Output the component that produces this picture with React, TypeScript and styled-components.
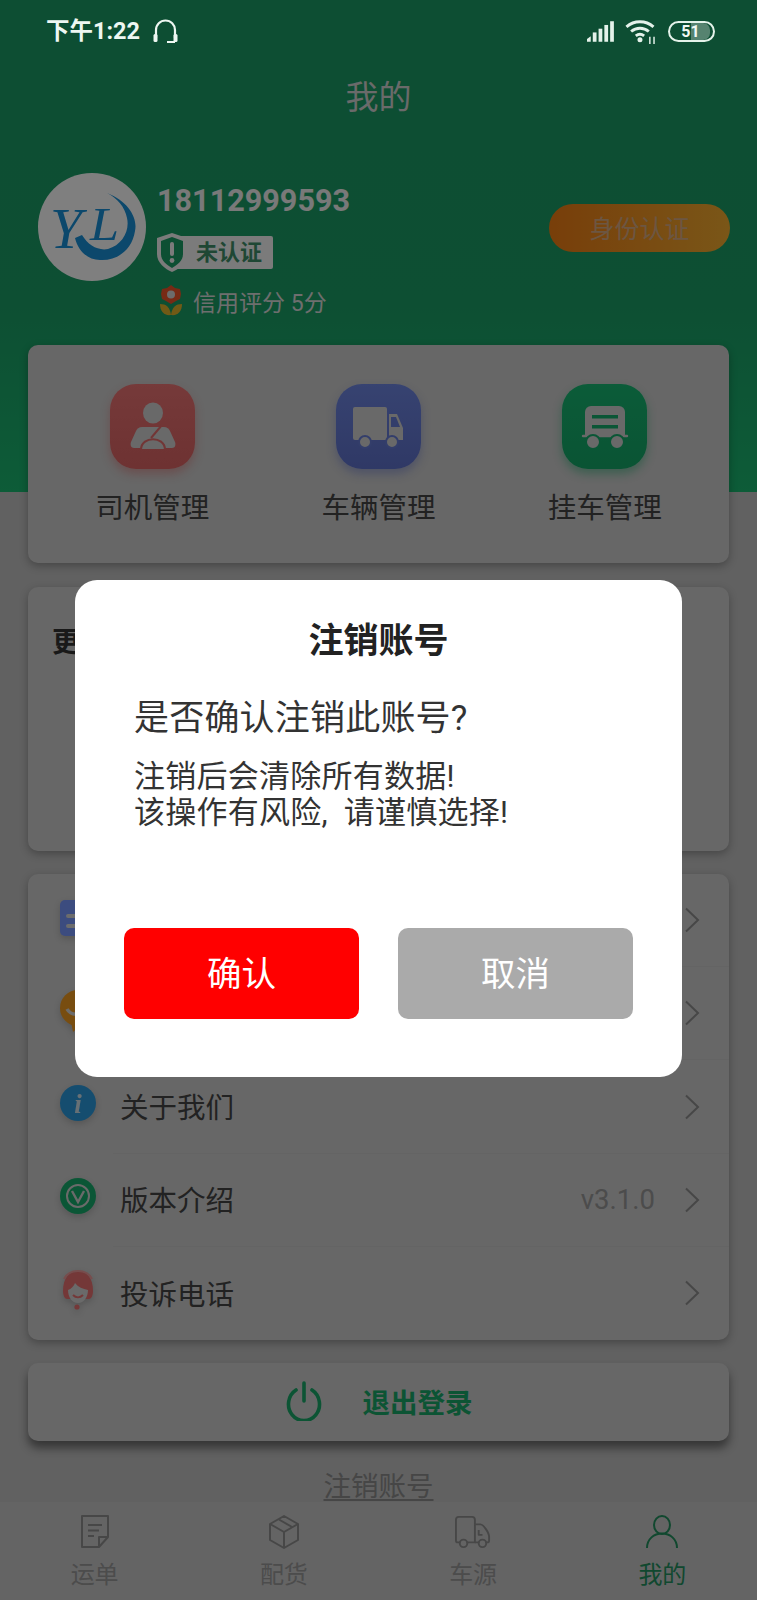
import React from "react";
import styled, { createGlobalStyle } from "styled-components";

const GlobalStyle = createGlobalStyle`
  html, body {
    margin: 0;
    padding: 0;
    background: #c2c2c2;
  }
  * {
    box-sizing: border-box;
  }
`;

const Page = styled.div`
  position: relative;
  width: 757px;
  height: 1600px;
  overflow: hidden;
  font-family: Roboto, "Noto Sans CJK SC", sans-serif;
  background: linear-gradient(#1a9c66 0, #1a9e66 300px, #1ab870 492px, #c2c2c2 492px);
`;

const StatusBar = styled.div`
  position: relative;
  z-index: 3;
  height: 62px;
  padding: 0 42px 0 46px;
  display: flex;
  align-items: center;
  justify-content: space-between;
  color: #eef7f2;
`;

const StatusGroup = styled.div`
  display: flex;
  align-items: center;
`;

const Time = styled.span`
  font-size: 23.5px;
  font-weight: 700;
  margin-right: 12px;
  padding-bottom: 4px;
`;

const TitleBar = styled.div`
  height: 68px;
  padding-bottom: 2px;
  display: flex;
  align-items: center;
  justify-content: center;
  font-size: 33px;
  color: #d4d4d4;
`;

const Profile = styled.div`
  height: 172px;
  margin-top: 43px;
  padding: 0 27px 0 38px;
  display: flex;
  align-items: flex-start;
`;

const Avatar = styled.div`
  width: 108px;
  height: 108px;
  border-radius: 50%;
  background: #ffffff;
  flex: none;
`;

const Info = styled.div`
  flex: 1;
  margin-left: 11px;
  padding-top: 9px;
`;

const Phone = styled.div`
  font-size: 30.6px;
  line-height: 38px;
  font-weight: 700;
  color: #f2f2f2;
`;

const Badge = styled.div`
  margin: 16px 0 0 13px;
  width: 103px;
  height: 33px;
  padding-bottom: 5px;
  display: flex;
  align-items: center;
  background: #f6f6f6;
  border-radius: 2px;
  font-size: 22px;
  font-weight: 700;
  color: #3f8f68;
`;

const ShieldSvg = styled.svg`
  flex: none;
  margin: 5px 9px 0 -13px;
`;

const Credit = styled.div`
  margin: 17px 0 0 2px;
  height: 31px;
  padding-bottom: 2px;
  display: flex;
  align-items: center;
  font-size: 23px;
  color: #dcdcdc;
  gap: 10px;
`;

const AuthButton = styled.div`
  flex: none;
  width: 181px;
  height: 48px;
  margin-top: 31px;
  padding-bottom: 3px;
  border-radius: 24px;
  display: flex;
  align-items: center;
  justify-content: center;
  background: linear-gradient(90deg, #f07d14, #f4ad30);
  color: #d8ac84;
  font-size: 25px;
`;

const Card = styled.div`
  width: 701px;
  margin: 0 28px;
  background: #cecece;
  border-radius: 10px;
  box-shadow: 0 3px 8px rgba(0, 0, 0, 0.28);
`;

const ManageCard = styled(Card)`
  height: 218px;
  padding: 39px 11px 0;
  display: grid;
  grid-template-columns: repeat(3, 1fr);
`;

const ManageItem = styled.div`
  display: flex;
  flex-direction: column;
  align-items: center;
`;

const ManageIcon = styled.div<{ $from: string; $to: string; $shadow: string }>`
  width: 85px;
  height: 85px;
  border-radius: 26px;
  background: linear-gradient(${(p) => p.$from}, ${(p) => p.$to});
  box-shadow: 0 5px 10px ${(p) => p.$shadow};
`;

const ManageLabel = styled.div`
  margin-top: 20px;
  font-size: 28.5px;
  line-height: 40px;
  color: #444444;
`;

const MoreCard = styled(Card)`
  height: 264px;
  margin-top: 24px;
  padding: 36px 24px;
`;

const MoreTitle = styled.div`
  font-size: 28px;
  line-height: 40px;
  font-weight: 700;
  color: #333333;
`;

const MenuCard = styled(Card)`
  height: 466px;
  margin-top: 23px;
  display: flex;
  flex-direction: column;
`;

const MenuRow = styled.div`
  flex: 1;
  display: flex;
  align-items: stretch;
  padding-left: 32px;
`;

const MenuIcon = styled.div`
  flex: none;
  width: 38px;
  align-self: center;
  margin-bottom: 6px;
  display: flex;
  filter: drop-shadow(0 3px 3px rgba(0, 0, 0, 0.16));
`;

const MenuBody = styled.div<{ $last?: boolean }>`
  flex: 1;
  margin-left: 15px;
  padding: 0 29px 0 7px;
  display: flex;
  align-items: center;
  border-bottom: ${(p) => (p.$last ? "none" : "1px solid #c8c8c8")};
`;

const MenuText = styled.div`
  flex: 1;
  padding-bottom: 2px;
  font-size: 28.5px;
  color: #444444;
`;

const MenuValue = styled.div`
  font-size: 27.5px;
  color: #989898;
  margin-right: 29px;
`;

const LogoutCard = styled(Card)`
  height: 78px;
  margin-top: 23px;
  padding-bottom: 2px;
  display: flex;
  align-items: center;
  justify-content: center;
  gap: 40px;
  font-size: 27.5px;
  font-weight: 700;
  color: #18a868;
  box-shadow: 0 7px 10px rgba(0, 0, 0, 0.45);
`;

const CancelLink = styled.div`
  margin-top: 32px;
  text-align: center;
  font-size: 27.5px;
  line-height: 28px;
  color: #8c8c8c;
  text-decoration: underline;
  text-underline-offset: 3px;
`;

const TabBar = styled.div`
  margin-top: 1px;
  height: 98px;
  padding-top: 13px;
  background: #c8c8c8;
  display: grid;
  grid-template-columns: repeat(4, 1fr);
`;

const Tab = styled.div<{ $active?: boolean }>`
  display: flex;
  flex-direction: column;
  align-items: center;
  font-size: 24px;
  line-height: 30px;
  color: ${(p) => (p.$active ? "#22905e" : "#989898")};
`;

const TabLabel = styled.div`
  margin-top: 11px;
`;

const Overlay = styled.div`
  position: absolute;
  inset: 0;
  z-index: 2;
  padding-top: 580px;
  display: flex;
  justify-content: center;
  align-items: flex-start;
  background: rgba(0, 0, 0, 0.5);
`;

const Dialog = styled.div`
  width: 607px;
  height: 497px;
  padding: 38px 49px 58px;
  background: #ffffff;
  border-radius: 22px;
  display: flex;
  flex-direction: column;
`;

const DialogTitle = styled.div`
  text-align: center;
  font-size: 35px;
  line-height: 48px;
  font-weight: 700;
  color: #222222;
`;

const DialogQuestion = styled.div`
  margin: 29px 0 0 10px;
  font-size: 35px;
  line-height: 48px;
  letter-spacing: 0.2px;
  color: #333333;
`;

const DialogBody = styled.div`
  margin: 16px 0 0 10px;
  font-size: 31px;
  line-height: 36px;
  letter-spacing: 0.25px;
  color: #333333;
`;

const DialogActions = styled.div`
  margin-top: auto;
  display: flex;
  gap: 39px;
`;

const DialogButton = styled.div<{ $color: string }>`
  flex: 1;
  height: 91px;
  padding-bottom: 5px;
  border-radius: 10px;
  display: flex;
  align-items: center;
  justify-content: center;
  font-size: 34.5px;
  color: #ffffff;
  background: ${(p) => p.$color};
`;

const StatusGap = styled.span`
  width: 10px;
`;

const Chevron = () => (
  <svg width="16" height="26" viewBox="0 0 16 26" fill="none">
    <path d="M2 1.5 14 13 2 24.5" stroke="#8e8e8e" strokeWidth="2" />
  </svg>
);

const Headset = () => (
  <svg width="27" height="26" viewBox="0 0 27 26" fill="none">
    <path d="M4 20V12a9.5 9.5 0 0 1 19 0v8" stroke="#eef7f2" strokeWidth="2.2" />
    <rect x="1.5" y="16" width="4" height="8" rx="1.5" fill="#eef7f2" />
    <rect x="21.5" y="16" width="4" height="8" rx="1.5" fill="#eef7f2" />
    <path d="M23 24h-8" stroke="#eef7f2" strokeWidth="2" />
  </svg>
);

const Signal = () => (
  <svg width="28" height="21" viewBox="0 0 30 22" fill="#e4f2ea">
    <path d="M0 22V19L4 16V22Z" />
    <rect x="6.2" y="12" width="4" height="10" />
    <rect x="12.4" y="8" width="4" height="14" />
    <rect x="18.6" y="4" width="4" height="18" />
    <rect x="24.8" y="0" width="4" height="22" />
  </svg>
);

const Wifi = () => (
  <svg width="32" height="25" viewBox="0 0 30 24" fill="none" stroke="#e4f2ea" strokeWidth="2.8">
    <path d="M1 7.5C8.5 1 19.5 1 27 7.5" />
    <path d="M5.5 12c5-4.2 12-4.2 17 0" />
    <path d="M10 16.2c2.6-2 5.4-2 8 0" />
    <circle cx="14" cy="20" r="2.4" fill="#e4f2ea" stroke="none" />
    <path d="M23.5 24v-7M27.5 24v-7" strokeWidth="1.4" />
  </svg>
);

const BatteryShell = styled.div`
  position: relative;
  width: 47px;
  height: 21px;
  margin-left: 11px;
  border: 2px solid #e4f2ea;
  border-radius: 11px;
  overflow: hidden;
  display: flex;
  align-items: center;
  justify-content: center;
  font-size: 16px;
  font-weight: 700;
  color: #f0f8f4;
`;

const BatteryLevel = styled.div`
  position: absolute;
  top: 0;
  bottom: 0;
  left: 21px;
  right: 3px;
  border-radius: 0 7px 7px 0;
  background: rgba(255, 255, 255, 0.3);
`;

const BatteryText = styled.span`
  position: relative;
  margin-right: 2px;
`;

const Logo = () => (
  <svg width="108" height="108" viewBox="0 0 108 108">
    <path
      d="M69 20C90 28 100 45 97 58C94 78 78 88 62 87C50 87 40 78 37 65L44 62C50 72 60 78 70 76C84 72 92 58 89 45C87 34 79 25 69 20Z"
      fill="#1890d8"
    />
    <text
      x="12"
      y="75"
      fontFamily="'Liberation Serif', serif"
      fontStyle="italic"
      fontSize="58"
      textLength="32"
      lengthAdjust="spacingAndGlyphs"
      fill="#1890d8"
    >
      Y
    </text>
    <text
      x="52"
      y="67"
      fontFamily="'Liberation Serif', serif"
      fontStyle="italic"
      fontSize="47"
      textLength="29"
      lengthAdjust="spacingAndGlyphs"
      fill="#1890d8"
    >
      L
    </text>
  </svg>
);

const Shield = () => (
  <ShieldSvg width="30" height="39" viewBox="0 0 30 39">
    <path d="M15 0 30 5V21C30 30 22 36 15 39 8 36 0 30 0 21V5Z" fill="#f6f6f6" />
    <path d="M15 4 26 8V21C26 28 20 32 15 35 10 32 4 28 4 21V8Z" fill="#1a9e66" />
    <rect x="13" y="9" width="4" height="14" rx="2" fill="#f6f6f6" />
    <circle cx="15" cy="27.5" r="2.4" fill="#f6f6f6" />
  </ShieldSvg>
);

const Flower = () => (
  <svg width="24" height="31" viewBox="0 0 24 31">
    <path d="M1 19C7 19 11 22 12 30 5 31 1 26 1 19Z" fill="#e2b42c" />
    <path d="M23 19C17 19 13 22 12 30 19 31 23 26 23 19Z" fill="#e2b42c" />
    <path d="M12 0 16 3 21 4 22 9 21 14 17 16 12 19 7 16 3 14 2 9 3 4 8 3Z" fill="#f0542a" />
    <circle cx="12" cy="9.5" r="4" fill="#d8d8d8" />
  </svg>
);

const DriverGlyph = () => (
  <svg width="85" height="85" viewBox="0 0 85 85">
    <ellipse cx="43" cy="29" rx="10" ry="10.5" fill="#d2d2d2" />
    <path
      d="M32 43H54C57 43 59 45 60 47L65 58C66 61 65 64 62 64H24C21 64 20 61 21 58L26 47C27 45 29 43 32 43Z"
      fill="#d2d2d2"
    />
    <path d="M52 41 41 54" stroke="#e46c6c" strokeWidth="2" />
    <path d="M31 65C32 52 54 52 55 65" stroke="#e46c6c" strokeWidth="2.2" fill="#d2d2d2" />
  </svg>
);

const TruckGlyph = () => (
  <svg width="85" height="85" viewBox="0 0 85 85">
    <path d="M19 23H49A2 2 0 0 1 51 25V56H19A2 2 0 0 1 17 54V25A2 2 0 0 1 19 23Z" fill="#d2d2d2" />
    <path d="M53 30H61L67 44V56H53Z" fill="#d2d2d2" />
    <path d="M55 33H60L64 43H55Z" fill="#677cd6" />
    <circle cx="29" cy="58" r="6" fill="#d2d2d2" stroke="#677cd6" strokeWidth="2" />
    <circle cx="56" cy="58" r="6" fill="#d2d2d2" stroke="#677cd6" strokeWidth="2" />
  </svg>
);

const TrailerGlyph = () => (
  <svg width="85" height="85" viewBox="0 0 85 85">
    <path d="M29 22H57A6 6 0 0 1 63 28V53H23V28A6 6 0 0 1 29 22Z" fill="#d2d2d2" />
    <rect x="30" y="31" width="26" height="3.5" fill="#15ad6c" />
    <rect x="30" y="41" width="26" height="3.5" fill="#15ad6c" />
    <path d="M21 52H65" stroke="#d2d2d2" strokeWidth="2.4" strokeLinecap="round" />
    <circle cx="31" cy="58" r="7" fill="#d2d2d2" stroke="#15ad6c" strokeWidth="2" />
    <circle cx="55" cy="58" r="7" fill="#d2d2d2" stroke="#15ad6c" strokeWidth="2" />
  </svg>
);

const DocIcon = () => (
  <svg width="38" height="36" viewBox="0 0 38 36">
    <rect width="36" height="36" rx="5" fill="#7898ff" />
    <rect x="6" y="14" width="24" height="4" rx="2" fill="#d8d8d8" />
    <rect x="6" y="24" width="24" height="4" rx="2" fill="#d8d8d8" />
  </svg>
);

const ChatIcon = () => (
  <svg width="38" height="42" viewBox="0 0 38 42">
    <circle cx="18" cy="18" r="18" fill="#f09a20" />
    <path d="M11 32 13 42 21 35Z" fill="#f09a20" />
    <path d="M7 19c4 7 14 7 20-1" stroke="#d8d8d8" strokeWidth="3.5" fill="none" />
  </svg>
);

const InfoIcon = () => (
  <svg width="38" height="40" viewBox="0 0 38 40">
    <circle cx="18" cy="19" r="18" fill="#2a9ade" />
    <text
      x="18"
      y="29"
      textAnchor="middle"
      fontFamily="'Liberation Serif', serif"
      fontStyle="italic"
      fontWeight="700"
      fontSize="27"
      fill="#cfe0ea"
    >
      i
    </text>
  </svg>
);

const VersionIcon = () => (
  <svg width="38" height="38" viewBox="0 0 38 38">
    <circle cx="18" cy="18" r="18" fill="#16ad6c" />
    <circle cx="18" cy="18" r="11" fill="none" stroke="#d4d4d4" strokeWidth="2" />
    <path d="M12 13 18 24 24 13" fill="none" stroke="#d4d4d4" strokeWidth="2.4" />
  </svg>
);

const AgentIcon = () => (
  <svg width="38" height="40" viewBox="0 0 38 40">
    <path d="M3 21C3 8 9 1 18 1s15 7 15 20c0 5-2 8-4 8H7c-2 0-4-3-4-8Z" fill="#e87070" />
    <path d="M8 20c3-1 6-4 7-7 3 4 8 6 13 7 0 7-4 13-10 13S8 27 8 20Z" fill="#d4d4d4" />
    <path d="M13 25c3 3 7 3 10 0" stroke="#e87070" strokeWidth="2" fill="none" />
    <path d="M4 9C7 3 12 1 18 1s11 2 14 8" stroke="#ee9a9a" strokeWidth="2" fill="none" />
    <circle cx="17" cy="37" r="2.6" fill="#e87070" />
  </svg>
);

const PowerIcon = () => (
  <svg width="38" height="40" viewBox="0 0 38 40" fill="none" stroke="#18a868" strokeWidth="3.6" strokeLinecap="round">
    <path d="M19 2V20" />
    <path d="M11 9A15.5 16.5 0 1 0 27 9" />
  </svg>
);

const OrderTabIcon = () => (
  <svg width="34" height="34" viewBox="0 0 34 34" fill="none" stroke="#8e8e8e" strokeWidth="2" strokeLinejoin="round">
    <path d="M4 1H30V22L21 32H4Z" />
    <path d="M21 32V22H30" />
    <path d="M10 10H24M10 15.5H21M10 21H16" />
  </svg>
);

const BoxTabIcon = () => (
  <svg width="34" height="34" viewBox="0 0 34 34" fill="none" stroke="#8e8e8e" strokeWidth="2" strokeLinejoin="round">
    <path d="M17 1 31 9V25L17 33 3 25V9Z" />
    <path d="M3 9 17 17 31 9M17 17V33" />
    <path d="M12 4.5 25 12" />
  </svg>
);

const TruckTabIcon = () => (
  <svg width="36" height="34" viewBox="0 0 38 34" fill="none" stroke="#8e8e8e" strokeWidth="2" strokeLinejoin="round">
    <path d="M6 28H3A2 2 0 0 1 1 26V4A3 3 0 0 1 4 1H18A3 3 0 0 1 21 4V28H12" />
    <path d="M21 9H27C30 9 36 18 36 22V26A2 2 0 0 1 34 28H32M26 28H21" />
    <circle cx="9" cy="29" r="4" />
    <circle cx="29" cy="29" r="4" />
    <path d="M25 15V20H29" />
  </svg>
);

const UserTabIcon = () => (
  <svg width="34" height="34" viewBox="0 0 34 34" fill="none" stroke="#22905e" strokeWidth="2">
    <ellipse cx="17" cy="10" rx="8" ry="9" />
    <path d="M2 33C2 24 9 18.5 17 18.5S32 24 32 33" />
  </svg>
);

const manageItems = [
  { label: "司机管理", from: "#ec7474", to: "#dc6464", shadow: "rgba(220,100,100,.45)", glyph: <DriverGlyph /> },
  { label: "车辆管理", from: "#6e86e2", to: "#5f72cc", shadow: "rgba(95,114,204,.45)", glyph: <TruckGlyph /> },
  { label: "挂车管理", from: "#17b872", to: "#14a868", shadow: "rgba(20,168,104,.45)", glyph: <TrailerGlyph /> },
];

const menuItems = [
  { label: "我的钱包", icon: <DocIcon /> },
  { label: "意见反馈", icon: <ChatIcon /> },
  { label: "关于我们", icon: <InfoIcon /> },
  { label: "版本介绍", icon: <VersionIcon />, value: "v3.1.0" },
  { label: "投诉电话", icon: <AgentIcon /> },
];

const App = () => {
  return (
    <Page>
      <GlobalStyle />
      <StatusBar>
        <StatusGroup>
          <Time>下午1:22</Time>
          <Headset />
        </StatusGroup>
        <StatusGroup>
          <Signal />
          <StatusGap />
          <Wifi />
          <BatteryShell>
            <BatteryLevel />
            <BatteryText>51</BatteryText>
          </BatteryShell>
        </StatusGroup>
      </StatusBar>
      <TitleBar>我的</TitleBar>
      <Profile>
        <Avatar>
          <Logo />
        </Avatar>
        <Info>
          <Phone>18112999593</Phone>
          <Badge>
            <Shield />
            未认证
          </Badge>
          <Credit>
            <Flower />
            信用评分 5分
          </Credit>
        </Info>
        <AuthButton>身份认证</AuthButton>
      </Profile>
      <ManageCard>
        {manageItems.map((item) => (
          <ManageItem key={item.label}>
            <ManageIcon $from={item.from} $to={item.to} $shadow={item.shadow}>
              {item.glyph}
            </ManageIcon>
            <ManageLabel>{item.label}</ManageLabel>
          </ManageItem>
        ))}
      </ManageCard>
      <MoreCard>
        <MoreTitle>更多服务</MoreTitle>
      </MoreCard>
      <MenuCard>
        {menuItems.map((item, i) => (
          <MenuRow key={item.label}>
            <MenuIcon>{item.icon}</MenuIcon>
            <MenuBody $last={i === menuItems.length - 1}>
              <MenuText>{item.label}</MenuText>
              {item.value && <MenuValue>{item.value}</MenuValue>}
              <Chevron />
            </MenuBody>
          </MenuRow>
        ))}
      </MenuCard>
      <LogoutCard>
        <PowerIcon />
        退出登录
      </LogoutCard>
      <CancelLink>注销账号</CancelLink>
      <TabBar>
        <Tab>
          <OrderTabIcon />
          <TabLabel>运单</TabLabel>
        </Tab>
        <Tab>
          <BoxTabIcon />
          <TabLabel>配货</TabLabel>
        </Tab>
        <Tab>
          <TruckTabIcon />
          <TabLabel>车源</TabLabel>
        </Tab>
        <Tab $active>
          <UserTabIcon />
          <TabLabel>我的</TabLabel>
        </Tab>
      </TabBar>
      <Overlay>
        <Dialog>
          <DialogTitle>注销账号</DialogTitle>
          <DialogQuestion>是否确认注销此账号?</DialogQuestion>
          <DialogBody>
            注销后会清除所有数据!
            <br />
            该操作有风险,&nbsp;&nbsp;请谨慎选择!
          </DialogBody>
          <DialogActions>
            <DialogButton $color="#ff0000">确认</DialogButton>
            <DialogButton $color="#aaaaaa">取消</DialogButton>
          </DialogActions>
        </Dialog>
      </Overlay>
    </Page>
  );
};

export default App;
